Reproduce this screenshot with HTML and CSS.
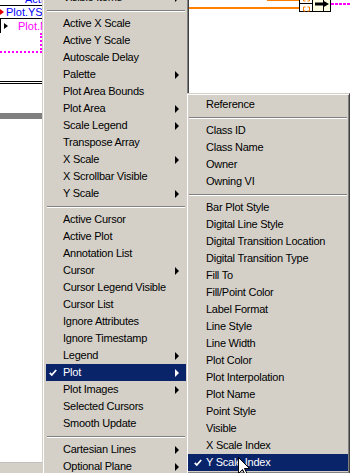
FILE: index.html
```html
<!DOCTYPE html>
<html lang="en">
<head>
    <meta charset="UTF-8">
    <title>Property Node - Plot menu</title>
    <link rel="stylesheet" href="styles.css">
</head>
<body>
    <div class="diagram">
        <!-- property node behind the menu -->
        <div class="node">
            <div class="node-row row-top"><span class="prop blue">Active Plot</span></div>
            <div class="node-row row-write"><span class="pin pin-red"></span><span class="prop blue">Plot.YScale</span></div>
            <div class="node-row row-read"><span class="pin pin-black"></span><span class="prop pink">Plot.Name</span></div>
        </div>
        <div class="cluster-wire"></div>
        <div class="frame-top"></div>
        <div class="gray-bar"></div>
        <div class="hscroll"></div>

        <svg class="wires" width="162" height="16" viewBox="0 0 162 16">
            <rect x="78" y="-1" width="32" height="2" fill="#ff8000"/>
            <rect x="0" y="7" width="110" height="2" fill="#ff8000"/>
            <rect x="110.5" y="-3.5" width="31" height="15" fill="#fff" stroke="#000"/>
            <rect x="124" y="-3" width="17" height="14" fill="#ffffe1"/>
            <line x1="110" y1="3.5" x2="124" y2="3.5" stroke="#000"/>
            <line x1="123.5" y1="-3" x2="123.5" y2="12" stroke="#000"/>
            <line x1="134.5" y1="-3" x2="134.5" y2="12" stroke="#000"/>
            <path d="M114.5 -1 v2 h2 M120.5 -1 v2 h-2" stroke="#ff8000" fill="none"/>
            <path d="M116.5 7 h-2 v4 h2 M118.5 7 h2 v4 h-2" stroke="#ff8000" fill="none"/>
            <path d="M126 2.5 h8 v-2 l6 3.5 l-6 3.5 v-2 h-8 z" fill="#000"/>
            <line x1="142" y1="4" x2="162" y2="4" stroke="#ff00ff" stroke-width="2" stroke-dasharray="3 1"/>
        </svg>
    </div>

    <div class="menu main-menu">
        <div class="item sub"><span class="mark"></span><span class="label">Visible Items</span></div>
        <div class="sep"></div>
        <div class="item"><span class="mark"></span><span class="label">Active X Scale</span></div>
        <div class="item"><span class="mark"></span><span class="label">Active Y Scale</span></div>
        <div class="item"><span class="mark"></span><span class="label">Autoscale Delay</span></div>
        <div class="item sub"><span class="mark"></span><span class="label">Palette</span></div>
        <div class="item"><span class="mark"></span><span class="label">Plot Area Bounds</span></div>
        <div class="item sub"><span class="mark"></span><span class="label">Plot Area</span></div>
        <div class="item sub"><span class="mark"></span><span class="label">Scale Legend</span></div>
        <div class="item"><span class="mark"></span><span class="label">Transpose Array</span></div>
        <div class="item sub"><span class="mark"></span><span class="label">X Scale</span></div>
        <div class="item"><span class="mark"></span><span class="label">X Scrollbar Visible</span></div>
        <div class="item sub"><span class="mark"></span><span class="label">Y Scale</span></div>
        <div class="sep"></div>
        <div class="item"><span class="mark"></span><span class="label">Active Cursor</span></div>
        <div class="item"><span class="mark"></span><span class="label">Active Plot</span></div>
        <div class="item"><span class="mark"></span><span class="label">Annotation List</span></div>
        <div class="item sub"><span class="mark"></span><span class="label">Cursor</span></div>
        <div class="item"><span class="mark"></span><span class="label">Cursor Legend Visible</span></div>
        <div class="item"><span class="mark"></span><span class="label">Cursor List</span></div>
        <div class="item"><span class="mark"></span><span class="label">Ignore Attributes</span></div>
        <div class="item"><span class="mark"></span><span class="label">Ignore Timestamp</span></div>
        <div class="item sub"><span class="mark"></span><span class="label">Legend</span></div>
        <div class="item sub selected">
            <span class="mark"><svg width="8" height="8" viewBox="0 0 8 8"><path d="M0.8 3.8 L2.8 6 L7.2 1" stroke="#fff" stroke-width="1.8" fill="none"/></svg></span>
            <span class="label">Plot</span>
        </div>
        <div class="item sub"><span class="mark"></span><span class="label">Plot Images</span></div>
        <div class="item"><span class="mark"></span><span class="label">Selected Cursors</span></div>
        <div class="item"><span class="mark"></span><span class="label">Smooth Update</span></div>
        <div class="sep"></div>
        <div class="item sub"><span class="mark"></span><span class="label">Cartesian Lines</span></div>
        <div class="item sub"><span class="mark"></span><span class="label">Optional Plane</span></div>
    </div>

    <div class="menu sub-menu">
        <div class="item"><span class="mark"></span><span class="label">Reference</span></div>
        <div class="sep"></div>
        <div class="item"><span class="mark"></span><span class="label">Class ID</span></div>
        <div class="item"><span class="mark"></span><span class="label">Class Name</span></div>
        <div class="item"><span class="mark"></span><span class="label">Owner</span></div>
        <div class="item"><span class="mark"></span><span class="label">Owning VI</span></div>
        <div class="sep"></div>
        <div class="item"><span class="mark"></span><span class="label">Bar Plot Style</span></div>
        <div class="item"><span class="mark"></span><span class="label">Digital Line Style</span></div>
        <div class="item"><span class="mark"></span><span class="label">Digital Transition Location</span></div>
        <div class="item"><span class="mark"></span><span class="label">Digital Transition Type</span></div>
        <div class="item"><span class="mark"></span><span class="label">Fill To</span></div>
        <div class="item"><span class="mark"></span><span class="label">Fill/Point Color</span></div>
        <div class="item"><span class="mark"></span><span class="label">Label Format</span></div>
        <div class="item"><span class="mark"></span><span class="label">Line Style</span></div>
        <div class="item"><span class="mark"></span><span class="label">Line Width</span></div>
        <div class="item"><span class="mark"></span><span class="label">Plot Color</span></div>
        <div class="item"><span class="mark"></span><span class="label">Plot Interpolation</span></div>
        <div class="item"><span class="mark"></span><span class="label">Plot Name</span></div>
        <div class="item"><span class="mark"></span><span class="label">Point Style</span></div>
        <div class="item"><span class="mark"></span><span class="label">Visible</span></div>
        <div class="item"><span class="mark"></span><span class="label">X Scale Index</span></div>
        <div class="item selected">
            <span class="mark"><svg width="8" height="8" viewBox="0 0 8 8"><path d="M0.8 3.8 L2.8 6 L7.2 1" stroke="#fff" stroke-width="1.8" fill="none"/></svg></span>
            <span class="label">Y Scale Index</span>
        </div>
    </div>

    <!-- mouse pointer -->
    <svg class="pointer" width="13" height="20" viewBox="0 0 13 20">
        <path d="M0.5 0.5 L0.5 16.5 L4.5 12.5 L7.5 18.5 L9.5 17.5 L6.5 11.5 L11.5 11.5 Z" fill="#fff" stroke="#000"/>
    </svg>
</body>
</html>
```

FILE: styles.css
```css
/* Base */
* {
    margin: 0;
    padding: 0;
    box-sizing: border-box;
}

body {
    width: 351px;
    height: 473px;
    background: #ffffff;
    font-family: 'Liberation Sans', Arial, sans-serif;
    font-size: 11px;
    position: relative;
    overflow: hidden;
}

/* Block diagram behind the menus */
.diagram {
    position: absolute;
    inset: 0;
}

.node {
    position: absolute;
    left: 0;
    top: -7px;
    width: 60px;
    background: #fff;
}

.node-row {
    position: relative;
    display: flex;
    align-items: center;
    white-space: nowrap;
    overflow: hidden;
    border-bottom: 1px solid #000;
}

.row-top {
    height: 13px;
    padding-left: 25px;
}

.row-write {
    height: 13px;
    padding-left: 6px;
}

.row-read {
    height: 14px;
    padding-left: 17px;
    border-left: 1px solid #000;
    border-bottom: none;
}

.prop {
    font-size: 11px;
    line-height: 12px;
}

.blue { color: #0000ff; }
.pink { color: #ff00ff; }

.pin {
    position: absolute;
    width: 0;
    height: 0;
    border-top: 3px solid transparent;
    border-bottom: 3px solid transparent;
    border-left: 4px solid #000;
}

.pin-red {
    left: 0;
    top: 3px;
    border-left-color: #e00000;
}

.pin-black {
    left: 3px;
    top: 4px;
}

.cluster-wire {
    position: absolute;
    left: 0;
    top: 33px;
    width: 42px;
    height: 20px;
    border-right: 2px dotted #ff00ff;
    border-bottom: 2px dotted #ff00ff;
}

.frame-top {
    position: absolute;
    left: 0;
    top: 81px;
    width: 42px;
    height: 3px;
    border-top: 1px solid #000;
    border-bottom: 1px solid #000;
}

.gray-bar {
    position: absolute;
    left: 0;
    top: 113px;
    width: 42px;
    height: 6px;
    background: #808080;
}

.hscroll {
    position: absolute;
    left: 0;
    top: 462px;
    width: 42px;
    height: 11px;
    background: #d4d0c8;
    border-top: 1px solid #c0c0c0;
}

.wires {
    position: absolute;
    left: 189px;
    top: 0;
}

/* Menus */
.menu {
    position: absolute;
    background: #d4d0c8;
    border: 1px solid;
    border-color: #d4d0c8 #404040 #404040 #d4d0c8;
    box-shadow: inset 1px 1px #ffffff, inset -1px -1px #808080;
    letter-spacing: -0.25px;
}

.main-menu {
    left: 42px;
    top: -14px;
    width: 147px;
    padding: 2px 2px 2px 3px;
}

.sub-menu {
    left: 186px;
    top: 93px;
    width: 164px;
    padding: 2px 1px 2px 1px;
}

.item {
    display: flex;
    align-items: center;
    height: 17px;
    line-height: 17px;
    color: #000;
    white-space: nowrap;
}

.mark {
    display: flex;
    align-items: center;
    width: 17px;
    height: 17px;
    padding-left: 3px;
    flex-shrink: 0;
}

.sub-menu .mark {
    width: 18px;
    padding-left: 6px;
}

.label {
    flex: 1;
}

.item.sub::after {
    content: '';
    width: 0;
    height: 0;
    margin-right: 7px;
    border-top: 4px solid transparent;
    border-bottom: 4px solid transparent;
    border-left: 4px solid #000;
}

.item.selected {
    background: #0a246a;
    color: #fff;
}

.item.selected::after {
    border-left-color: #fff;
}

.sep {
    height: 9px;
    padding-top: 4px;
}

.sep::before {
    content: '';
    display: block;
    margin: 0 1px;
    border-top: 1px solid #808080;
    border-bottom: 1px solid #ffffff;
}

.pointer {
    position: absolute;
    left: 238px;
    top: 457px;
}
```
